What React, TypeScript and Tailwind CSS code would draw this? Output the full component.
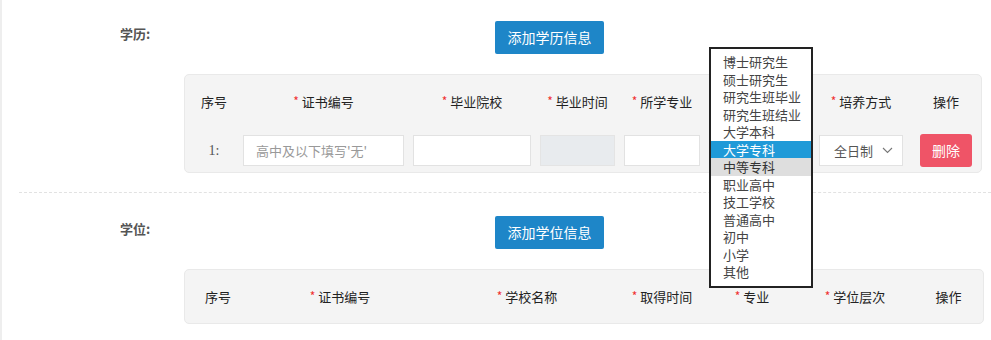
import React from "react";

const FONT = { fontFamily: '"Microsoft YaHei", "Noto Sans CJK SC", "Noto Sans", sans-serif' };

const XUELI_OPTIONS = [
  "博士研究生",
  "硕士研究生",
  "研究生班毕业",
  "研究生班结业",
  "大学本科",
  "大学专科",
  "中等专科",
  "职业高中",
  "技工学校",
  "普通高中",
  "初中",
  "小学",
  "其他",
];

function Req({ children }: { children: React.ReactNode }) {
  return (
    <span className="whitespace-nowrap">
      <span className="text-[#f0302f] text-[12px] mr-[3px] relative top-[-1px]">*</span>
      {children}
    </span>
  );
}

function Chevron() {
  return (
    <svg width="11" height="7" viewBox="0 0 11 7" fill="none" className="ml-[9px]">
      <path d="M1 1l4.5 4.5L10 1" stroke="#777" strokeWidth="1.1" />
    </svg>
  );
}

export default function App() {
  return (
    <div className="relative w-[991px] h-[340px] overflow-hidden bg-white border-l-2 border-[#eeeeee] text-[13px] text-[#222]" style={FONT}>
      {/* 学历 */}
      <section className="flex pt-[21px] pb-[19px]">
        <div className="w-[182px] shrink-0 pl-[118px] pt-[3px]">
          <span className="font-bold text-[#555] text-[13px] leading-[17px]">学历:</span>
        </div>
        <div className="flex-1 flex flex-col">
          <button className="ml-[311px] w-[109px] h-[33px] rounded-[2px] bg-[#1e86c8] text-white text-[14px]">添加学历信息</button>
          <div className="mt-[20px] mr-[9px] h-[99px] rounded-[5px] bg-[#f4f4f4] border border-[#e9e9e9] flex flex-col">
            <div className="h-[53px] flex items-center">
              <div className="w-[58px] text-center">序号</div>
              <div className="w-[161px] text-center"><Req>证书编号</Req></div>
              <div className="w-[118px] ml-[9px] text-center"><Req>毕业院校</Req></div>
              <div className="w-[75px] ml-[9px] text-center"><Req>毕业时间</Req></div>
              <div className="w-[76px] ml-[9px] text-center"><Req>所学专业</Req></div>
              {/* 学历 column header sits under the open list */}
              <div className="w-[101px] ml-[9px]" />
              <div className="w-[84px] ml-[9px] text-center"><Req>培养方式</Req></div>
              <div className="w-[52px] ml-[17px] text-center">操作</div>
            </div>
            <div className="mt-[6px] h-[33px] flex items-center">
              <div className="w-[58px] text-center text-[#555] text-[14px]" style={{ fontFamily: '"Liberation Serif", serif' }}>1:</div>
              <div className="w-[161px] h-[31px] bg-white border border-[#e2e2e2] flex items-center pl-[12px] pr-[44px] text-[#999] overflow-hidden whitespace-nowrap">高中及以下填写'无'</div>
              <div className="w-[118px] h-[31px] ml-[9px] bg-white border border-[#e2e2e2]" />
              <div className="w-[75px] h-[31px] ml-[9px] bg-[#e8ebee] border border-[#e4e4e4]" />
              <div className="w-[76px] h-[31px] ml-[9px] bg-white border border-[#e2e2e2]" />
              <div className="w-[101px] h-[31px] ml-[9px] bg-white border border-[#e2e2e2]" />
              <div className="w-[84px] h-[31px] ml-[9px] bg-white border border-[#e2e2e2] flex items-center pl-[14px] text-[#555]">
                全日制
                <Chevron />
              </div>
              <button className="w-[52px] h-[33px] ml-[17px] rounded-[3px] bg-[#ef5467] text-white text-[14px]">删除</button>
            </div>
          </div>
        </div>
      </section>

      <div className="ml-[17px] border-t border-dashed border-[#e2e2e2]" />

      {/* 学位 */}
      <section className="flex pt-[23px]">
        <div className="w-[182px] shrink-0 pl-[118px] pt-[3px]">
          <span className="font-bold text-[#555] text-[13px] leading-[17px]">学位:</span>
        </div>
        <div className="flex-1 flex flex-col">
          <button className="ml-[311px] w-[109px] h-[33px] rounded-[2px] bg-[#1e86c8] text-white text-[14px]">添加学位信息</button>
          <div className="mt-[20px] mr-[9px] h-[55px] rounded-[5px] bg-[#f4f4f4] border border-[#e9e9e9] flex items-center">
            <div className="w-[66px] text-center">序号</div>
            <div className="w-[178px] text-center"><Req>证书编号</Req></div>
            <div className="w-[196px] text-center"><Req>学校名称</Req></div>
            <div className="w-[74px] text-center"><Req>取得时间</Req></div>
            <div className="w-[106px] text-center"><Req>专业</Req></div>
            <div className="w-[100px] text-center"><Req>学位层次</Req></div>
            <div className="w-[69px] ml-[9px] text-center">操作</div>
          </div>
        </div>
      </section>

      {/* 学历 dropdown list */}
      <div className="absolute left-[707px] top-[47px] w-[104px] h-[241px] bg-white border-2 border-[#222] pt-[4px]">
        {XUELI_OPTIONS.map((o) => (
          <div
            key={o}
            className={
              "h-[17.5px] leading-[17.5px] pl-[12px] text-[13px] " +
              (o === "大学专科" ? "bg-[#1f9ad8] text-white" : o === "中等专科" ? "bg-[#dedede] text-[#333]" : "text-[#444]")
            }
          >
            {o}
          </div>
        ))}
      </div>
    </div>
  );
}
